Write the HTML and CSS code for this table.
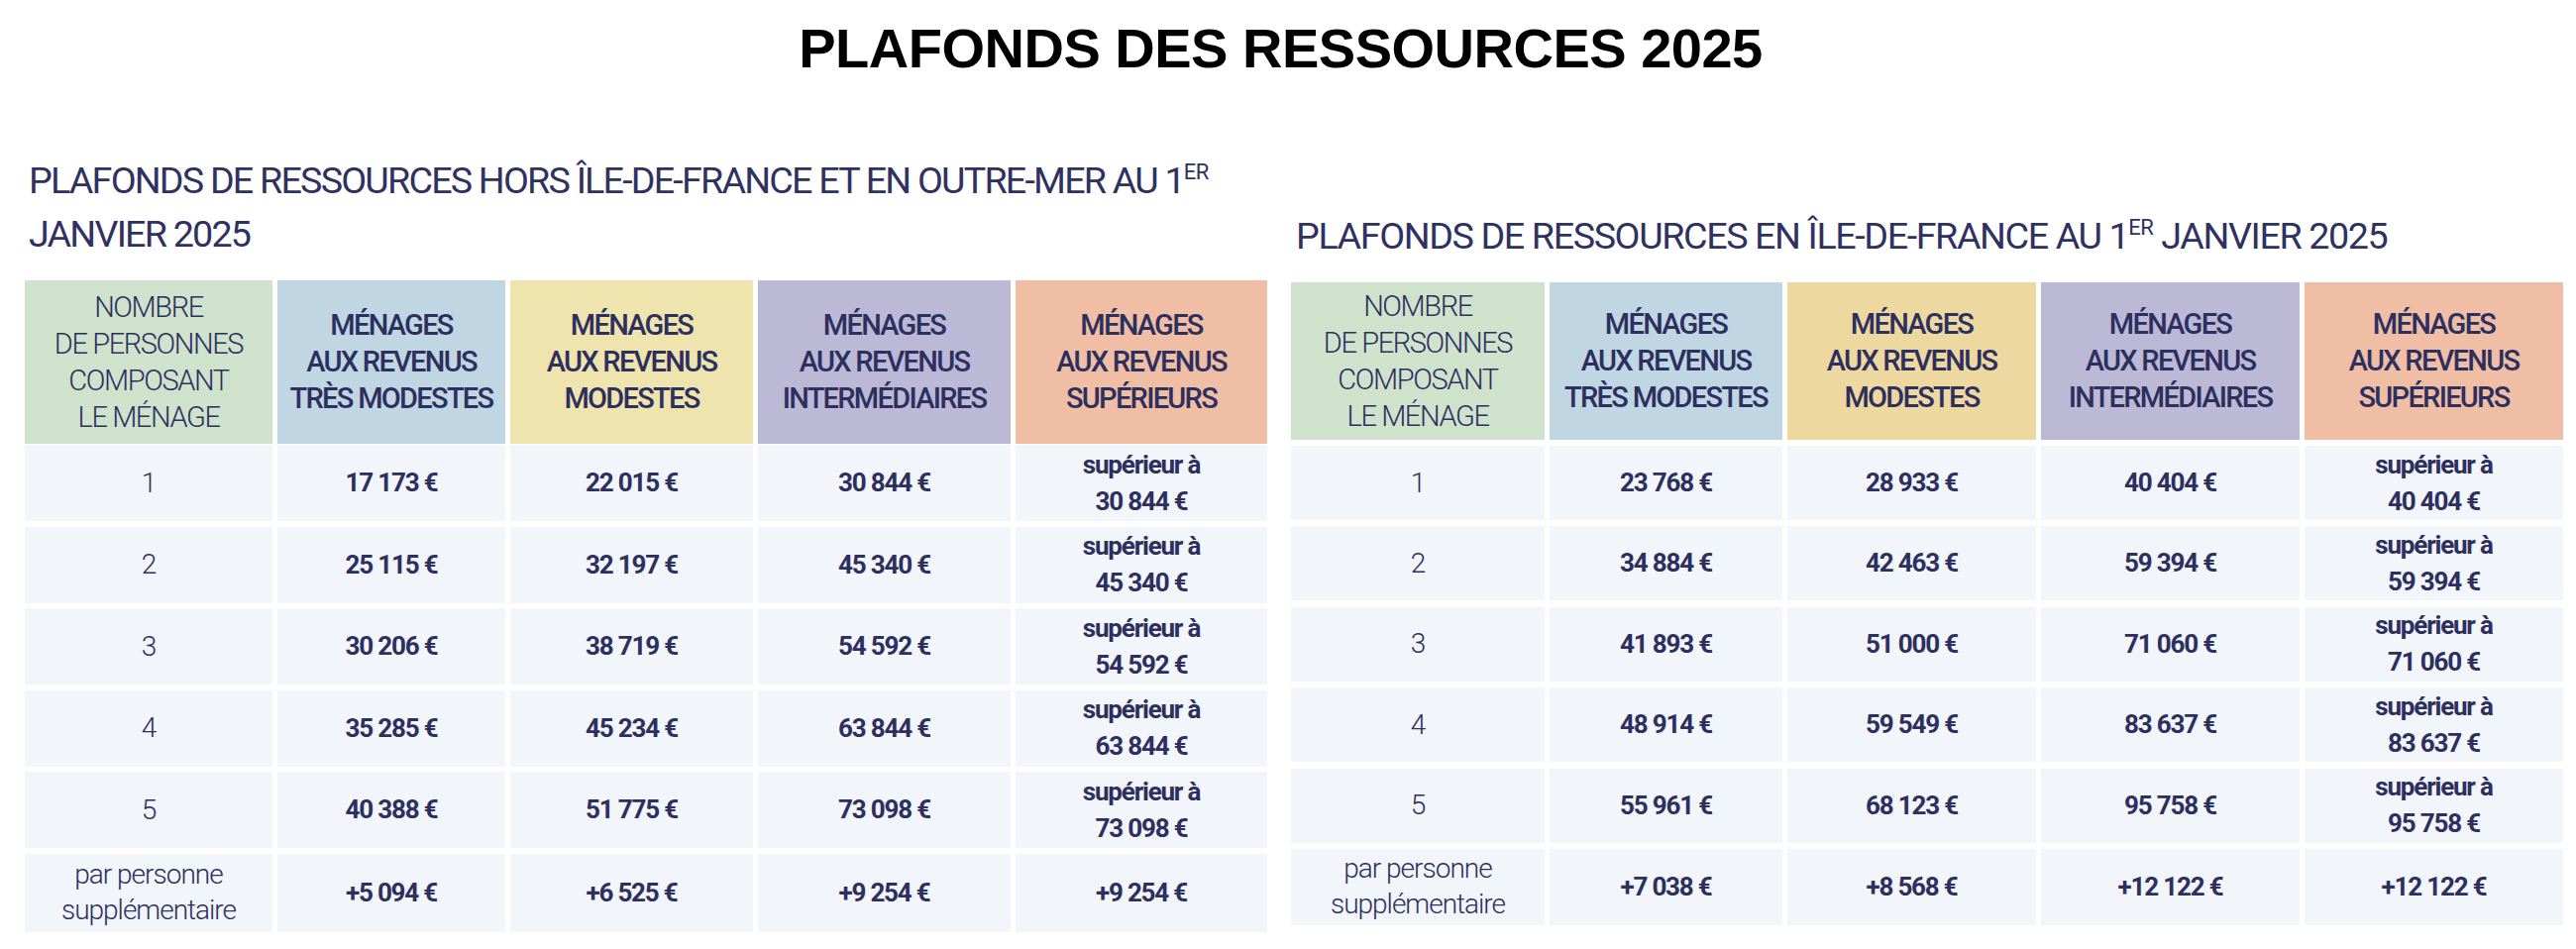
FILE: index.html
```html
<!DOCTYPE html>
<html lang="fr">
<head>
<meta charset="utf-8">
<title>Plafonds des ressources 2025</title>
<link rel="stylesheet" href="styles.css">
</head>
<body>
<h1 class="page-title">PLAFONDS DES RESSOURCES 2025</h1>
<main class="panels">
  <section class="panel panel--hors">
    <h2 class="panel-title">PLAFONDS DE RESSOURCES HORS ÎLE-DE-FRANCE ET EN OUTRE-MER AU 1<sup>ER</sup><br>JANVIER 2025</h2>
    <div class="rtable">
      <div class="thead">
        <div class="th th--count">NOMBRE<br>DE PERSONNES<br>COMPOSANT<br>LE MÉNAGE</div>
        <div class="th th--blue">MÉNAGES<br>AUX REVENUS<br>TRÈS MODESTES</div>
        <div class="th th--yellow">MÉNAGES<br>AUX REVENUS<br>MODESTES</div>
        <div class="th th--purple">MÉNAGES<br>AUX REVENUS<br>INTERMÉDIAIRES</div>
        <div class="th th--orange">MÉNAGES<br>AUX REVENUS<br>SUPÉRIEURS</div>
      </div>
      <div class="tbody">
        <div class="row"><div class="td td--count">1</div><div class="td">17&nbsp;173&nbsp;€</div><div class="td">22&nbsp;015&nbsp;€</div><div class="td">30&nbsp;844&nbsp;€</div><div class="td">supérieur à<br>30&nbsp;844&nbsp;€</div></div>
        <div class="row"><div class="td td--count">2</div><div class="td">25&nbsp;115&nbsp;€</div><div class="td">32&nbsp;197&nbsp;€</div><div class="td">45&nbsp;340&nbsp;€</div><div class="td">supérieur à<br>45&nbsp;340&nbsp;€</div></div>
        <div class="row"><div class="td td--count">3</div><div class="td">30&nbsp;206&nbsp;€</div><div class="td">38&nbsp;719&nbsp;€</div><div class="td">54&nbsp;592&nbsp;€</div><div class="td">supérieur à<br>54&nbsp;592&nbsp;€</div></div>
        <div class="row"><div class="td td--count">4</div><div class="td">35&nbsp;285&nbsp;€</div><div class="td">45&nbsp;234&nbsp;€</div><div class="td">63&nbsp;844&nbsp;€</div><div class="td">supérieur à<br>63&nbsp;844&nbsp;€</div></div>
        <div class="row"><div class="td td--count">5</div><div class="td">40&nbsp;388&nbsp;€</div><div class="td">51&nbsp;775&nbsp;€</div><div class="td">73&nbsp;098&nbsp;€</div><div class="td">supérieur à<br>73&nbsp;098&nbsp;€</div></div>
        <div class="row"><div class="td td--count">par personne<br>supplémentaire</div><div class="td">+5&nbsp;094&nbsp;€</div><div class="td">+6&nbsp;525&nbsp;€</div><div class="td">+9&nbsp;254&nbsp;€</div><div class="td">+9&nbsp;254&nbsp;€</div></div>
      </div>
    </div>
  </section>
  <section class="panel panel--idf">
    <h2 class="panel-title">PLAFONDS DE RESSOURCES EN ÎLE-DE-FRANCE AU 1<sup>ER</sup> JANVIER 2025</h2>
    <div class="rtable">
      <div class="thead">
        <div class="th th--count">NOMBRE<br>DE PERSONNES<br>COMPOSANT<br>LE MÉNAGE</div>
        <div class="th th--blue">MÉNAGES<br>AUX REVENUS<br>TRÈS MODESTES</div>
        <div class="th th--yellow">MÉNAGES<br>AUX REVENUS<br>MODESTES</div>
        <div class="th th--purple">MÉNAGES<br>AUX REVENUS<br>INTERMÉDIAIRES</div>
        <div class="th th--orange">MÉNAGES<br>AUX REVENUS<br>SUPÉRIEURS</div>
      </div>
      <div class="tbody">
        <div class="row"><div class="td td--count">1</div><div class="td">23&nbsp;768&nbsp;€</div><div class="td">28&nbsp;933&nbsp;€</div><div class="td">40&nbsp;404&nbsp;€</div><div class="td">supérieur à<br>40&nbsp;404&nbsp;€</div></div>
        <div class="row"><div class="td td--count">2</div><div class="td">34&nbsp;884&nbsp;€</div><div class="td">42&nbsp;463&nbsp;€</div><div class="td">59&nbsp;394&nbsp;€</div><div class="td">supérieur à<br>59&nbsp;394&nbsp;€</div></div>
        <div class="row"><div class="td td--count">3</div><div class="td">41&nbsp;893&nbsp;€</div><div class="td">51&nbsp;000&nbsp;€</div><div class="td">71&nbsp;060&nbsp;€</div><div class="td">supérieur à<br>71&nbsp;060&nbsp;€</div></div>
        <div class="row"><div class="td td--count">4</div><div class="td">48&nbsp;914&nbsp;€</div><div class="td">59&nbsp;549&nbsp;€</div><div class="td">83&nbsp;637&nbsp;€</div><div class="td">supérieur à<br>83&nbsp;637&nbsp;€</div></div>
        <div class="row"><div class="td td--count">5</div><div class="td">55&nbsp;961&nbsp;€</div><div class="td">68&nbsp;123&nbsp;€</div><div class="td">95&nbsp;758&nbsp;€</div><div class="td">supérieur à<br>95&nbsp;758&nbsp;€</div></div>
        <div class="row"><div class="td td--count">par personne<br>supplémentaire</div><div class="td">+7&nbsp;038&nbsp;€</div><div class="td">+8&nbsp;568&nbsp;€</div><div class="td">+12&nbsp;122&nbsp;€</div><div class="td">+12&nbsp;122&nbsp;€</div></div>
      </div>
    </div>
  </section>
</main>
</body>
</html>
```

FILE: styles.css
```css
* { box-sizing: border-box; }

body {
  margin: 0;
  background: #ffffff;
  color: #2d2f5f;
  font-family: "Roboto", "DejaVu Sans Condensed", sans-serif;
}

.page-title {
  margin: 21px 0 0;
  padding-right: 15px;
  font-family: "Liberation Sans", Arial, sans-serif;
  font-weight: 700;
  font-size: 56px;
  line-height: 56px;
  letter-spacing: -0.5px;
  color: #000000;
  text-align: center;
}

.panels {
  display: flex;
  align-items: flex-start;
  gap: 24px;
  margin-top: 78px;
  padding-left: 25px;
}

.panel--hors { width: 1254px; }
.panel--idf { width: 1284px; }

.panel-title {
  margin: 0 0 20px;
  padding-left: 4px;
  font-weight: 400;
  font-size: 37.7px;
  line-height: 54px;
  letter-spacing: -1.8px;
  white-space: nowrap;
  color: #2f3161;
}

.panel--idf .panel-title {
  padding-top: 56px;
  padding-left: 5px;
  letter-spacing: -1.4px;
}

.panel-title sup {
  font-size: 22px;
  line-height: 0;
  letter-spacing: -0.5px;
  vertical-align: super;
}

.rtable {
  display: flex;
  flex-direction: column;
  gap: 1px;
}

.panel--idf .rtable { gap: 6px; }

.thead,
.row {
  display: grid;
  column-gap: 5px;
}

.panel--hors .thead,
.panel--hors .row {
  grid-template-columns: 250px 230px 245px 255px 254px;
}

.panel--idf .thead,
.panel--idf .row {
  grid-template-columns: 256px 235px 251px 261px 261px;
}

.panel--hors .thead { height: 165px; }
.panel--idf .thead { height: 159px; }

.th {
  display: flex;
  align-items: center;
  justify-content: center;
  text-align: center;
  font-size: 29px;
  line-height: 37px;
  letter-spacing: -1.7px;
  font-weight: 500;
}

.th--count { font-weight: 300; letter-spacing: -1.4px; background: #cfe2cc; }
.th--blue { background: #c0d6e3; }
.th--yellow { background: #efe4ad; }
.th--purple { background: #bcb9d6; }
.th--orange { background: #f0bea4; }

.panel--idf .th--yellow { background: #edd8a0; }

.tbody {
  display: flex;
  flex-direction: column;
}

.panel--hors .tbody { gap: 5.6px; }
.panel--idf .tbody { gap: 6.4px; }

.panel--hors .row { height: 77px; }
.panel--hors .row:last-child { height: 79px; }
.panel--idf .row { height: 75px; }
.panel--idf .row:last-child { height: 77px; }

.td {
  display: flex;
  align-items: center;
  justify-content: center;
  text-align: center;
  background: #f2f5fa;
  font-size: 26px;
  line-height: 37px;
  letter-spacing: -1.2px;
  font-weight: 700;
}

.td--count {
  font-weight: 300;
  font-size: 28px;
  line-height: 36px;
  letter-spacing: -1px;
}
```
